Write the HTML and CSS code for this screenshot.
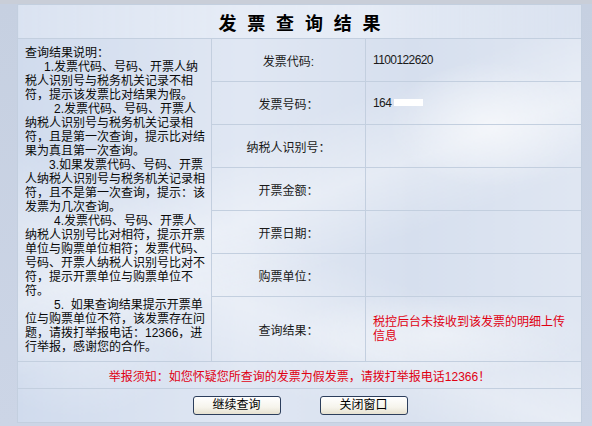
FILE: index.html
```html
<!DOCTYPE html>
<html lang="zh-CN">
<head>
<meta charset="utf-8">
<title>发票查询结果</title>
<link rel="stylesheet" href="styles.css">
</head>
<body>
<div class="page">
<table class="result">
  <colgroup>
    <col class="c-note">
    <col class="c-label">
    <col class="c-value">
  </colgroup>
  <tr class="r-title">
    <td colspan="3" class="title"><span class="title-text">发票查询结果</span></td>
  </tr>
  <tr class="r-field">
    <td rowspan="7" class="note">
      <span class="ln">查询结果说明：</span>
      <span class="ln i19">1.发票代码、号码、开票人纳</span>
      <span class="ln">税人识别号与税务机关记录不相</span>
      <span class="ln">符，提示该发票比对结果为假。</span>
      <span class="ln i29">2.发票代码、号码、开票人</span>
      <span class="ln">纳税人识别号与税务机关记录相</span>
      <span class="ln">符，且是第一次查询，提示比对结</span>
      <span class="ln">果为真且第一次查询。</span>
      <span class="ln i24">3.如果发票代码、号码、开票</span>
      <span class="ln">人纳税人识别号与税务机关记录相</span>
      <span class="ln">符，且不是第一次查询，提示：该</span>
      <span class="ln">发票为几次查询。</span>
      <span class="ln i29">4.发票代码、号码、开票人</span>
      <span class="ln">纳税人识别号比对相符，提示开票</span>
      <span class="ln">单位与购票单位相符；发票代码、</span>
      <span class="ln">号码、开票人纳税人识别号比对不</span>
      <span class="ln">符，提示开票单位与购票单位不</span>
      <span class="ln">符。</span>
      <span class="ln i29">5.&nbsp; 如果查询结果提示开票单</span>
      <span class="ln">位与购票单位不符，该发票存在问</span>
      <span class="ln">题，请拨打举报电话：12366，进</span>
      <span class="ln">行举报，感谢您的合作。</span>
    </td>
    <td class="label">发票代码:</td>
    <td class="value"><span class="num">1100122620</span></td>
  </tr>
  <tr class="r-field">
    <td class="label">发票号码：</td>
    <td class="value"><span class="num">164</span><span class="mask"></span></td>
  </tr>
  <tr class="r-field">
    <td class="label">纳税人识别号：</td>
    <td class="value"></td>
  </tr>
  <tr class="r-field">
    <td class="label">开票金额：</td>
    <td class="value"></td>
  </tr>
  <tr class="r-field">
    <td class="label">开票日期：</td>
    <td class="value"></td>
  </tr>
  <tr class="r-field">
    <td class="label">购票单位：</td>
    <td class="value"></td>
  </tr>
  <tr class="r-result">
    <td class="label">查询结果：</td>
    <td class="value red">税控后台未接收到该发票的明细上传<br>信息</td>
  </tr>
  <tr class="r-notice">
    <td colspan="3" class="notice">举报须知：如您怀疑您所查询的发票为假发票，请拨打举报电话12366！</td>
  </tr>
  <tr class="r-buttons">
    <td colspan="3">
      <div class="btns">
        <button class="btn" type="button">继续查询</button>
        <button class="btn" type="button">关闭窗口</button>
      </div>
    </td>
  </tr>
</table>
</div>
</body>
</html>
```

FILE: styles.css
```css
html, body {
  margin: 0;
  padding: 0;
}
body {
  width: 592px;
  height: 426px;
  overflow: hidden;
  background: linear-gradient(to bottom, #c9ced8 0, #c9ced8 4px, #c6d0e1 4px, #ccd5e6 100%);
  font-family: "Liberation Sans", "Noto Sans CJK SC", sans-serif;
  font-size: 12px;
  color: #111;
}
.page {
  padding: 4px 0 0 17px;
}
.result {
  width: 564px;
  border-collapse: collapse;
  border: 1px solid #f3f6fb;
  table-layout: fixed;
  background-color: #d9e2f0;
  background-image:
    radial-gradient(ellipse 140px 90px at 470px 120px, rgba(255,255,255,0.55), rgba(255,255,255,0) 70%),
    radial-gradient(ellipse 220px 60px at 420px 330px, rgba(255,255,255,0.45), rgba(255,255,255,0) 70%),
    radial-gradient(ellipse 160px 120px at 60px 330px, rgba(255,255,255,0.3), rgba(255,255,255,0) 70%),
    linear-gradient(160deg, rgba(255,255,255,0) 35%, rgba(255,255,255,0.35) 48%, rgba(255,255,255,0) 60%),
    linear-gradient(200deg, rgba(255,255,255,0) 55%, rgba(255,255,255,0.3) 68%, rgba(255,255,255,0) 80%),
    linear-gradient(to right, #d0dbed 0, #e0e7f3 40%, #d6dfee 70%, #dfe6f2 100%);
}
.c-note { width: 194px; }
.c-label { width: 154px; }
.c-value { width: 216px; }
.result td {
  border: 1px solid #c3cfdf;
  padding: 0;
}
.r-title td { height: 33px; }
.r-field td { height: 42px; }
.r-result td { height: 64px; }
.r-notice td { height: 26px; }
.r-buttons td { height: 33px; }
.title {
  text-align: center;
  background: linear-gradient(to right, rgba(225,232,244,0.6), rgba(236,241,249,0.7) 60%, rgba(214,223,238,0.5));
}
.title-text {
  font-family: "Noto Sans CJK SC", sans-serif;
  font-weight: 700;
  font-size: 18px;
  letter-spacing: 10.8px;
  margin-right: -10.8px;
  color: #000;
}
.note {
  vertical-align: middle;
  padding: 0 0 0 7px !important;
  line-height: 14px;
  color: #0a0a0a;
}
.ln {
  display: block;
  white-space: nowrap;
}
.i19 { padding-left: 19px; }
.i24 { padding-left: 24px; }
.i29 { padding-left: 29px; }
.label {
  text-align: center;
  color: #1a1a1a;
}
.value {
  padding-left: 7px !important;
  color: #1a1a1a;
}
.num {
  letter-spacing: -0.6px;
}
.mask {
  display: inline-block;
  width: 29px;
  height: 7px;
  background: #fff;
  margin-left: 3px;
  vertical-align: 1px;
}
.red {
  color: #e00012;
  line-height: 14px;
}
.notice {
  text-align: center;
  color: #e00012;
}
.btns {
  display: flex;
  justify-content: center;
  gap: 39px;
  padding-left: 1px;
}
.btn {
  width: 88px;
  height: 19px;
  padding: 0;
  border: 1px solid #2c3e5c;
  border-radius: 3px;
  background: linear-gradient(to bottom, #ffffff 0, #f6f4ec 60%, #e6e1d0 100%);
  font-family: "Liberation Sans", "Noto Sans CJK SC", sans-serif;
  font-size: 12px;
  line-height: 17px;
  color: #000;
}
```
